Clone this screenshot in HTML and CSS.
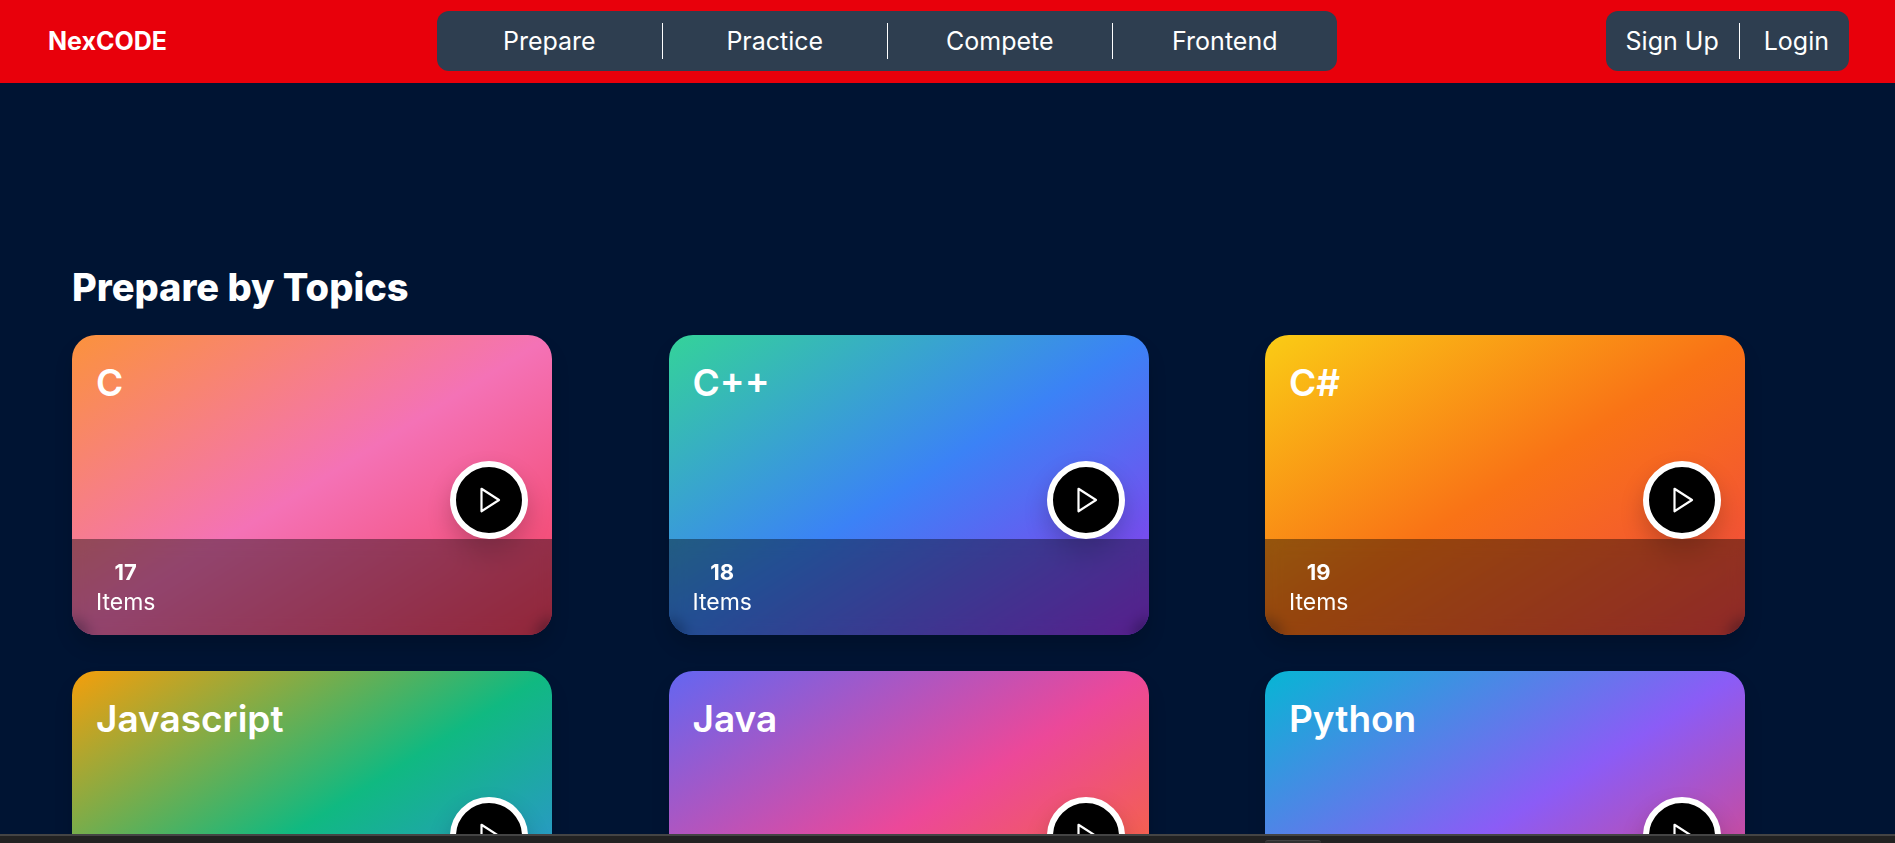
FILE: index.html
```html
<!DOCTYPE html>
<html lang="en">
<head>
<meta charset="utf-8">
<title>NexCODE</title>
<link rel="stylesheet" href="styles.css">
</head>
<body>
<header class="header">
  <a class="logo" href="#">NexCODE</a>
  <nav class="menu">
    <a class="menu-link" href="#">Prepare</a>
    <a class="menu-link" href="#">Practice</a>
    <a class="menu-link" href="#">Compete</a>
    <a class="menu-link" href="#">Frontend</a>
  </nav>
  <div class="menu account">
    <a class="menu-link" href="#">Sign Up</a>
    <a class="menu-link" href="#">Login</a>
  </div>
</header>
<main class="topics">
  <h1 class="topics-title">Prepare by Topics</h1>
  <div class="grid">
    <article class="card c">
      <h2 class="card-title">C</h2>
      <button class="play" aria-label="Start C"><svg class="play-icon" viewBox="0 0 24 24"><path d="M6 3 20 12 6 21Z"/></svg></button>
      <div class="card-foot"><p class="count"><strong>17</strong><span>Items</span></p></div>
    </article>
    <article class="card cpp">
      <h2 class="card-title">C++</h2>
      <button class="play" aria-label="Start C++"><svg class="play-icon" viewBox="0 0 24 24"><path d="M6 3 20 12 6 21Z"/></svg></button>
      <div class="card-foot"><p class="count"><strong>18</strong><span>Items</span></p></div>
    </article>
    <article class="card csharp">
      <h2 class="card-title">C#</h2>
      <button class="play" aria-label="Start C#"><svg class="play-icon" viewBox="0 0 24 24"><path d="M6 3 20 12 6 21Z"/></svg></button>
      <div class="card-foot"><p class="count"><strong>19</strong><span>Items</span></p></div>
    </article>
    <article class="card javascript">
      <h2 class="card-title">Javascript</h2>
      <button class="play" aria-label="Start Javascript"><svg class="play-icon" viewBox="0 0 24 24"><path d="M6 3 20 12 6 21Z"/></svg></button>
      <div class="card-foot"></div>
    </article>
    <article class="card java">
      <h2 class="card-title">Java</h2>
      <button class="play" aria-label="Start Java"><svg class="play-icon" viewBox="0 0 24 24"><path d="M6 3 20 12 6 21Z"/></svg></button>
      <div class="card-foot"></div>
    </article>
    <article class="card python">
      <h2 class="card-title">Python</h2>
      <button class="play" aria-label="Start Python"><svg class="play-icon" viewBox="0 0 24 24"><path d="M6 3 20 12 6 21Z"/></svg></button>
      <div class="card-foot"></div>
    </article>
  </div>
</main>
<footer class="taskbar"><div class="taskbar-tab"></div></footer>
</body>
</html>
```
FILE: styles.css
```css
* { box-sizing: border-box; margin: 0; }
body {
  display: flex;
  flex-direction: column;
  height: 100vh;
  overflow: hidden;
  background: #001433;
  color: #fff;
  font-family: Inter, "Open Sans", sans-serif;
}
a { color: inherit; text-decoration: none; }

.header {
  display: flex;
  flex: none;
  align-items: center;
  justify-content: space-between;
  padding: 11px 46px 12px 48px;
  background: #e8000b;
}
.logo { min-width: 120px; font-size: 25px; line-height: 30px; font-weight: 700; }
.menu {
  display: flex;
  padding: 12px 0;
  border-radius: 12px;
  background: #2e3e50;
  font-size: 25px;
  line-height: 36px;
}
.menu-link { min-width: 225px; text-align: center; }
.menu-link + .menu-link { border-left: 1px solid #fff; }
.account { padding: 12px 18px; }
.account .menu-link { min-width: 0; }
.account .menu-link:first-child { padding-right: 20px; padding-left: 2px; }
.account .menu-link:last-child { padding-left: 24px; padding-right: 2px; }

.topics {
  flex: 1;
  min-height: 0;
  overflow: hidden;
  padding: 180px 150px 0 72px;
}
.topics-title { margin-bottom: 24px; font-size: 38px; line-height: 48px; font-weight: 800; }
.grid {
  display: grid;
  grid-template-columns: repeat(3, minmax(0, 480px));
  justify-content: space-between;
  row-gap: 36px;
}
.card {
  display: flex;
  flex-direction: column;
  border-radius: 24px;
  box-shadow: 0 12px 18px rgba(0, 0, 0, .15);
}
.card-title { padding: 24px 24px 0; font-size: 37px; line-height: 48px; font-weight: 600; }
.play {
  display: flex;
  align-items: center;
  justify-content: center;
  align-self: flex-end;
  width: 78px;
  height: 78px;
  margin: 54px 24px 0;
  padding: 0;
  border: 6px solid #fff;
  border-radius: 50%;
  background: #000;
  box-shadow: 0 12px 24px rgba(0, 0, 0, .2);
}
.play-icon { width: 30px; fill: none; stroke: #fff; stroke-width: 1.75; stroke-linejoin: round; }
.card-foot {
  display: flex;
  min-height: 96px;
  padding: 18px 24px;
  border-radius: 0 0 24px 24px;
  background: rgba(0, 0, 0, .4);
  backdrop-filter: blur(8px);
}
.count { display: flex; flex-direction: column; align-items: center; font-size: 23px; line-height: 30px; }
.count strong { font-size: 22px; }

.c { background: linear-gradient(to bottom right, #fb923c, #f472b6, #f43f5e); }
.cpp { background: linear-gradient(to bottom right, #34d399, #3b82f6, #9333ea); }
.csharp { background: linear-gradient(to bottom right, #facc15, #f97316, #ef4444); }
.javascript { background: linear-gradient(to bottom right, #f59e0b, #10b981, #3b82f6); }
.java { background: linear-gradient(to bottom right, #6366f1, #ec4899, #f97316); }
.python { background: linear-gradient(to bottom right, #06b6d4, #8b5cf6, #f43f5e); }

.taskbar {
  display: flex;
  flex: none;
  justify-content: center;
  padding: 4px 0 0 691px;
  border-top: 2px solid #444;
  background: #222;
}
.taskbar-tab { width: 56px; height: 3px; border-top: 1px solid #444; border-radius: 4px 4px 0 0; background: #303030; }
```
